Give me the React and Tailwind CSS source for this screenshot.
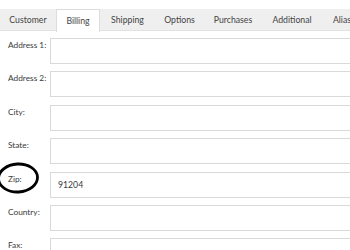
import React from "react";

const tabs = [
  { label: "Customer", w: "w-[56px]" },
  { label: "Billing", w: "w-[44px]", active: true },
  { label: "Shipping", w: "w-[55px]" },
  { label: "Options", w: "w-[49px]" },
  { label: "Purchases", w: "w-[58px]" },
  { label: "Additional", w: "w-[60px]" },
  { label: "Alias", w: "w-[40px]" },
];

const rows = [
  { label: "Address 1:" },
  { label: "Address 2:" },
  { label: "City:" },
  { label: "State:" },
  { label: "Zip:", value: "91204" },
  { label: "Country:" },
  { label: "Fax:" },
];

export default function App() {
  return (
    <div
      className="relative w-[350px] h-[250px] overflow-hidden bg-white text-[#3a3a3a]"
      style={{ fontFamily: 'Lato, "Open Sans", sans-serif' }}
    >
      <div className="mt-[9px] flex h-[22px] w-[400px] bg-[#efefef] border-b border-[#e2e2e2]">
        {tabs.map((t) => (
          <div
            key={t.label}
            className={`${t.w} shrink-0 flex items-center justify-center whitespace-nowrap text-[8.7px] text-[#444] ${
              t.active ? "bg-white border-x border-t border-[#dcdcdc] h-[23px] -mb-px" : ""
            }`}
          >
            {t.label}
          </div>
        ))}
      </div>
      <div className="mt-[7px] flex flex-col gap-[7.4px]">
        {rows.map((r) => (
          <div key={r.label} className="flex h-[26px]">
            <div className="w-[50px] shrink-0 pl-[8px] pt-[1px] whitespace-nowrap text-[8.3px] leading-[12px]">
              {r.label}
            </div>
            <div className="w-[320px] shrink-0 h-[26px] border border-[#d9d9d9] bg-white flex items-center pl-[7px] text-[8.7px]">
              {r.value || ""}
            </div>
          </div>
        ))}
      </div>
      <svg className="absolute left-0 top-0" width="350" height="250">
        <ellipse cx="18" cy="178" rx="19.5" ry="14" fill="none" stroke="#000" strokeWidth="2.8" transform="rotate(-3 18 178)" />
      </svg>
    </div>
  );
}
